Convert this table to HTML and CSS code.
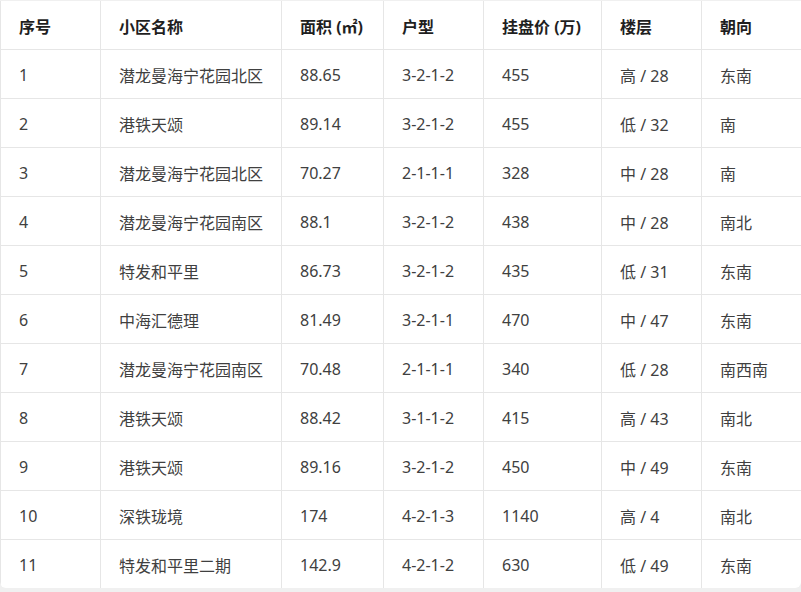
FILE: index.html
```html
<!DOCTYPE html>
<html lang="zh-CN">
<head>
<meta charset="utf-8">
<title>房源列表</title>
<link rel="stylesheet" href="styles.css">
</head>
<body>
<div class="card">
  <table class="listing">
    <colgroup>
      <col class="c1"><col class="c2"><col class="c3"><col class="c4"><col class="c5"><col class="c6"><col class="c7">
    </colgroup>
    <thead>
      <tr><th>序号</th><th>小区名称</th><th>面积 (㎡)</th><th>户型</th><th>挂盘价 (万)</th><th>楼层</th><th>朝向</th></tr>
    </thead>
    <tbody>
      <tr><td>1</td><td>潜龙曼海宁花园北区</td><td>88.65</td><td>3-2-1-2</td><td>455</td><td>高 / 28</td><td>东南</td></tr>
      <tr><td>2</td><td>港铁天颂</td><td>89.14</td><td>3-2-1-2</td><td>455</td><td>低 / 32</td><td>南</td></tr>
      <tr><td>3</td><td>潜龙曼海宁花园北区</td><td>70.27</td><td>2-1-1-1</td><td>328</td><td>中 / 28</td><td>南</td></tr>
      <tr><td>4</td><td>潜龙曼海宁花园南区</td><td>88.1</td><td>3-2-1-2</td><td>438</td><td>中 / 28</td><td>南北</td></tr>
      <tr><td>5</td><td>特发和平里</td><td>86.73</td><td>3-2-1-2</td><td>435</td><td>低 / 31</td><td>东南</td></tr>
      <tr><td>6</td><td>中海汇德理</td><td>81.49</td><td>3-2-1-1</td><td>470</td><td>中 / 47</td><td>东南</td></tr>
      <tr><td>7</td><td>潜龙曼海宁花园南区</td><td>70.48</td><td>2-1-1-1</td><td>340</td><td>低 / 28</td><td>南西南</td></tr>
      <tr><td>8</td><td>港铁天颂</td><td>88.42</td><td>3-1-1-2</td><td>415</td><td>高 / 43</td><td>南北</td></tr>
      <tr><td>9</td><td>港铁天颂</td><td>89.16</td><td>3-2-1-2</td><td>450</td><td>中 / 49</td><td>东南</td></tr>
      <tr><td>10</td><td>深铁珑境</td><td>174</td><td>4-2-1-3</td><td>1140</td><td>高 / 4</td><td>南北</td></tr>
      <tr><td>11</td><td>特发和平里二期</td><td>142.9</td><td>4-2-1-2</td><td>630</td><td>低 / 49</td><td>东南</td></tr>
    </tbody>
  </table>
</div>
</body>
</html>
```
FILE: styles.css
```css
html, body {
  margin: 0;
  padding: 0;
  background: #f0f0f0;
}
body {
  padding-top: 1px;
  font-family: "Noto Sans", "Noto Sans CJK SC", sans-serif;
}
.card {
  width: 801px;
  background: #ffffff;
  border-radius: 0 0 6px 6px;
  overflow: hidden;
}
.listing {
  width: 801px;
  border-collapse: collapse;
  table-layout: fixed;
}
.c1 { width: 100px; }
.c2 { width: 181px; }
.c3 { width: 102px; }
.c4 { width: 100px; }
.c5 { width: 118px; }
.c6 { width: 100px; }
.c7 { width: 100px; }
.listing th,
.listing td {
  height: 47px;
  padding: 1px 0 0 18px;
  text-align: left;
  vertical-align: middle;
  border: 1px solid #e6e6e6;
  white-space: nowrap;
  font-size: 16px;
}
.listing thead tr > * { border-top: none; }
.listing tbody tr:last-child > * { border-bottom: none; }
.listing tr > :last-child { border-right: none; }
.listing th {
  font-weight: 700;
  color: #1f1f1f;
}
.listing td {
  color: #404040;
}
```
